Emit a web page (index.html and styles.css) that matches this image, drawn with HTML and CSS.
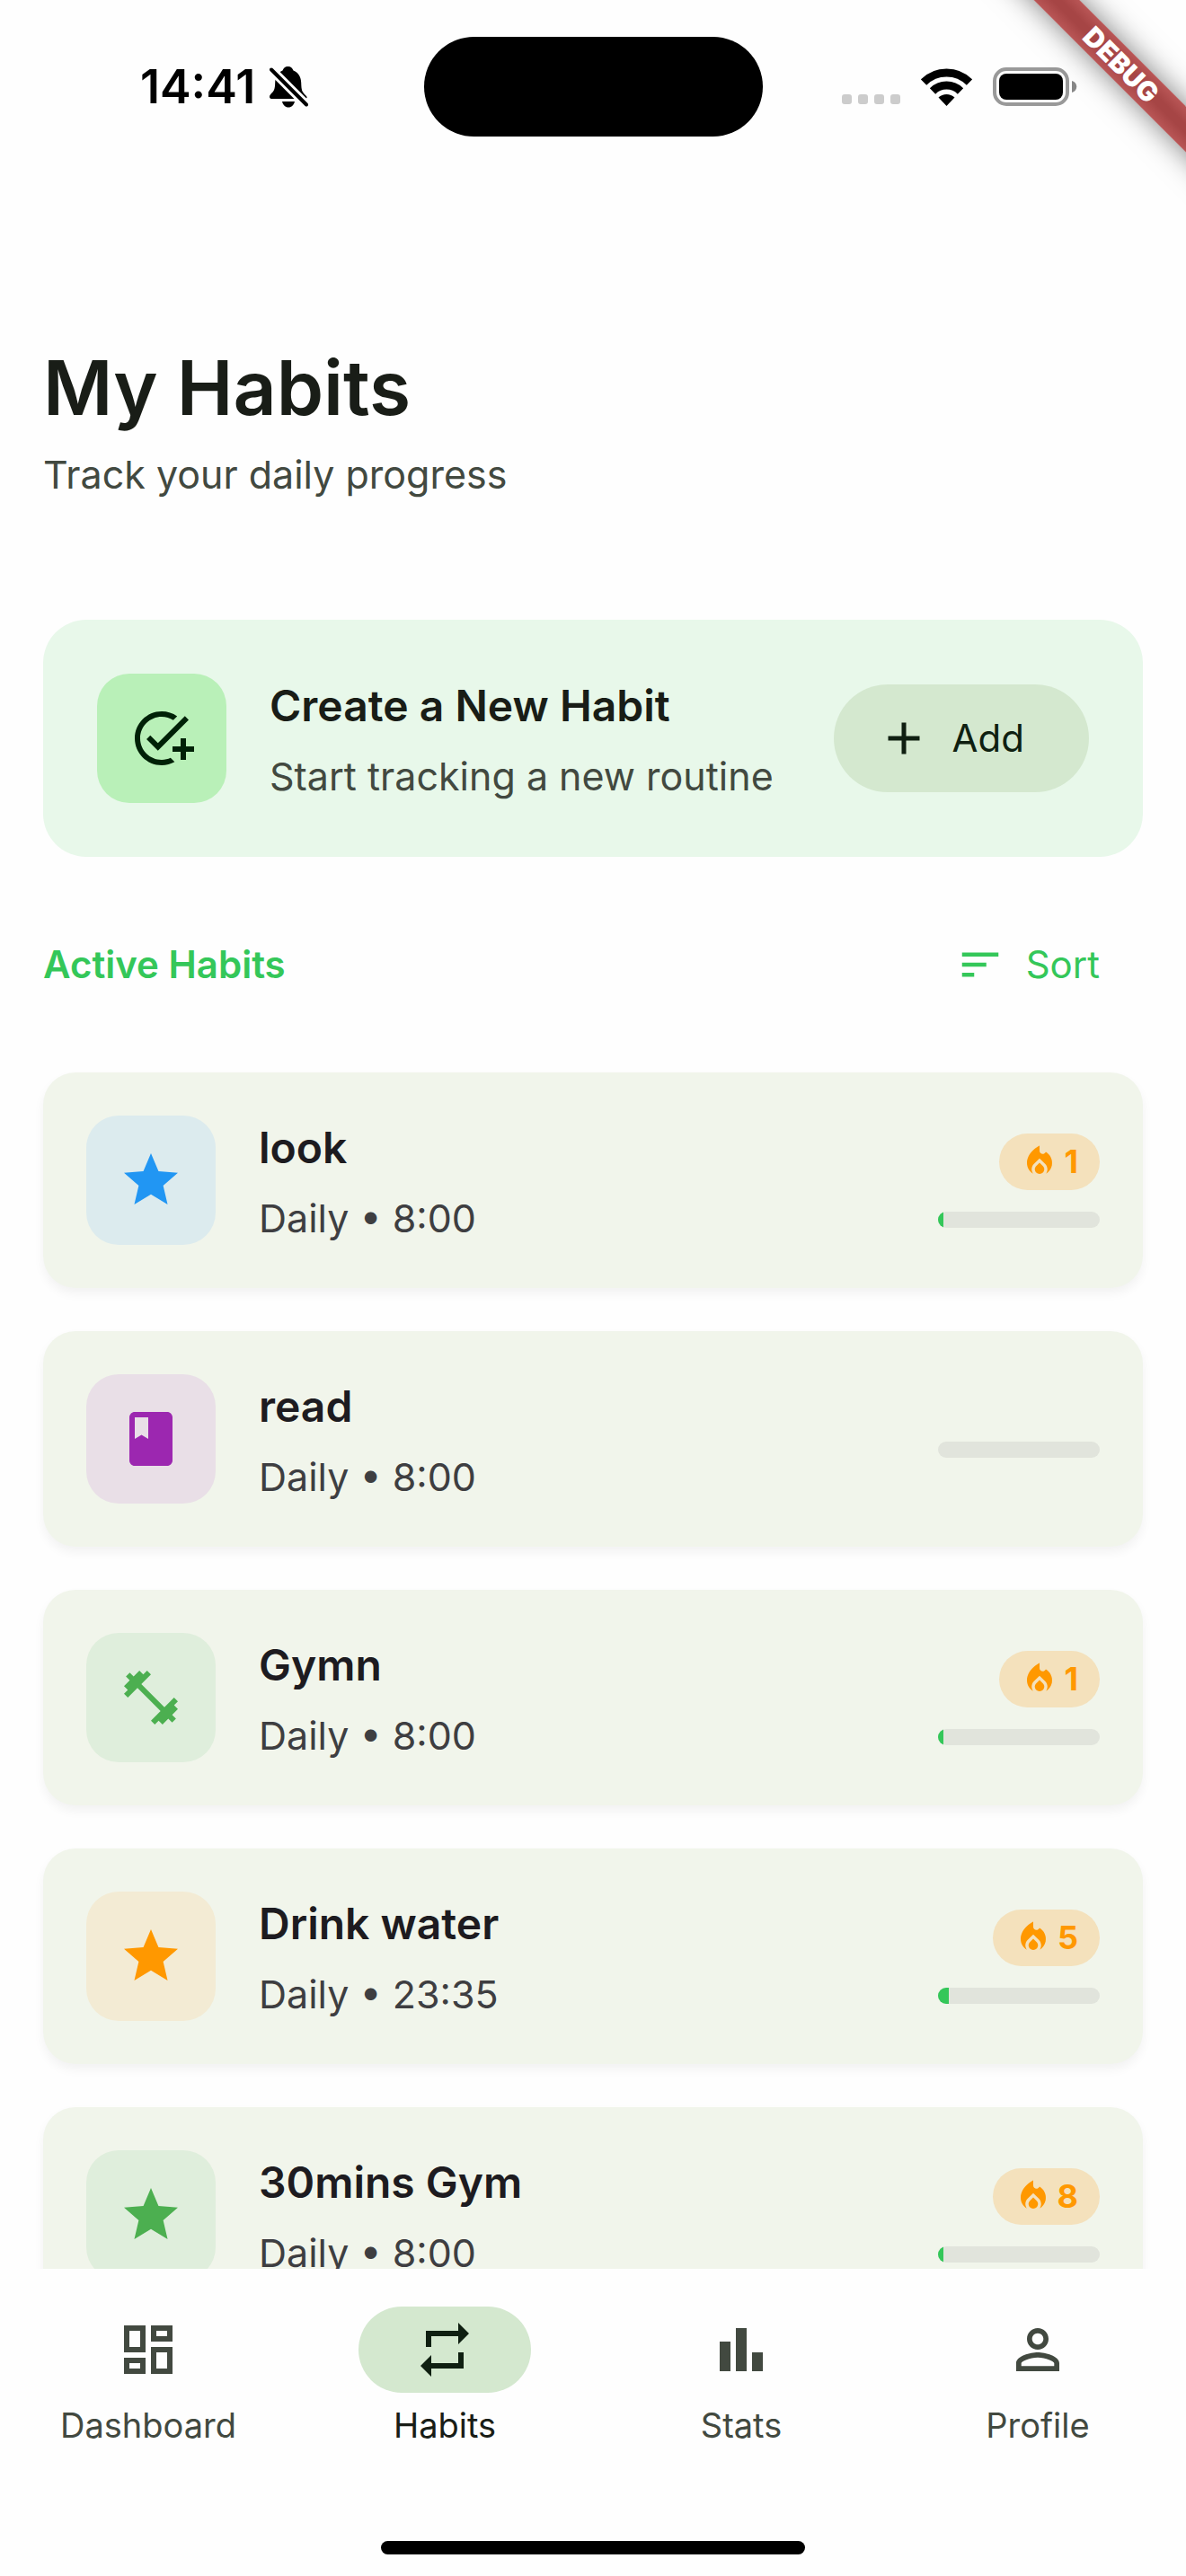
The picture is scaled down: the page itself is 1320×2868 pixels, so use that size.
FILE: index.html
```html
<!DOCTYPE html>
<html lang="en">
<head>
<meta charset="utf-8">
<meta name="viewport" content="width=device-width, initial-scale=1">
<title>My Habits</title>
<link rel="stylesheet" href="styles.css">
</head>
<body>
<svg class="sprite" aria-hidden="true">
  <symbol id="star" viewBox="0 0 24 24"><path d="M12 17.27L18.18 21l-1.64-7.03L22 9.24l-7.19-.61L12 2 9.19 8.63 2 9.24l5.46 4.73L5.82 21z"/></symbol>
  <symbol id="book" viewBox="0 0 24 24"><path d="M18 2H6c-1.1 0-2 .9-2 2v16c0 1.1.9 2 2 2h12c1.1 0 2-.9 2-2V4c0-1.1-.9-2-2-2zM6 4h5v8l-2.500-1.500L6 12V4z"/></symbol>
  <symbol id="dumbbell" viewBox="0 0 24 24"><path d="M20.57 14.86L22 13.43 20.57 12 17 15.57 8.43 7 12 3.43 10.57 2 9.14 3.43 7.71 2 5.57 4.14 4.14 2.71 2.71 4.14l1.43 1.43L2 7.71l1.43 1.43L2 10.57 3.43 12 7 8.43 15.57 17 12 20.57 13.43 22l1.43-1.43L16.29 22l2.14-2.14 1.43 1.43 1.43-1.43-1.43-1.43L22 16.29z"/></symbol>
  <symbol id="fire" viewBox="0 0 24 24"><path d="M12 12.9l-2.13 2.09C9.31 15.55 9 16.28 9 17.06 9 18.68 10.35 20 12 20s3-1.32 3-2.94c0-.78-.31-1.52-.87-2.07z"/><path d="M16 6l-.44.55C14.38 8.02 12 7.19 12 5.3V2S4 6 4 13c0 2.920 1.560 5.470 3.890 6.860-.56-.79-.89-1.760-.89-2.800 0-1.320.52-2.560 1.470-3.500L12 10.100l3.530 3.470c.95.93 1.470 2.170 1.470 3.500 0 1.020-.31 1.960-.85 2.750 1.890-1.150 3.290-3.060 3.710-5.300.66-3.550-1.070-6.900-3.860-8.520z"/></symbol>
</svg>

<header class="status">
  <div class="status-left">
    <time>14:41</time>
    <svg class="bell" viewBox="0 0 43 46" aria-label="Silent mode">
      <path d="M20.500 0c3.200 0 5 1.800 6 4.500 6 2.500 8.500 7.500 8.700 13.500.3 9 .8 10 5.300 14.500 2 2 1 3.500-1 3.500H3c-3 0-4-2.500-1.800-5C5 27 6 26 6.200 18c.2-6 2.800-11 8.300-13.500C15.500 1.800 17.300 0 20.500 0z"/>
      <path d="M14 39h14c-1 4-3.500 6.500-7 6.500S15 43 14 39z"/>
      <path class="bell-gap" d="M2 3.500L41 42.500"/>
      <path class="bell-slash" d="M2 3.500L41 42.500"/>
    </svg>
  </div>
  <div class="island"></div>
  <div class="status-right">
    <div class="cell"><i></i><i></i><i></i><i></i></div>
    <svg class="wifi" viewBox="0 0 57 42" aria-label="Wi-Fi">
      <path class="arc" d="M3 15.500A36 36 0 0 1 54 15.500M13 25.500A22 22 0 0 1 44 25.500"/>
      <path d="M28.500 42L19.500 32.500A13 13 0 0 1 37.500 32.500z"/>
    </svg>
    <svg class="battery" viewBox="0 0 94 44" aria-label="Battery full">
      <rect class="case" x="2" y="2" width="81" height="39" rx="13"/>
      <rect x="7" y="7" width="71" height="29" rx="8"/>
      <path class="nub" d="M88 15c7 2 7 11 0 13z"/>
    </svg>
  </div>
</header>
<div class="corner"><div class="debug">DEBUG</div></div>

<main class="page">
  <h1>My Habits</h1>
  <p class="lead">Track your daily progress</p>

  <section class="create">
    <span class="tile tile-add"><svg class="icon" viewBox="0 0 24 24" aria-hidden="true"><path d="M22 5.180L10.590 16.600l-4.240-4.240 1.410-1.410 2.830 2.830 10-10zM12 20c-4.410 0-8-3.590-8-8s3.590-8 8-8c1.570 0 3.040.46 4.280 1.250l1.450-1.450C16.100 2.670 14.130 2 12 2 6.480 2 2 6.480 2 12s4.480 10 10 10c1.730 0 3.360-.44 4.780-1.220l-1.500-1.500c-1 .46-2.110.72-3.280.72zM19 15h-3v2h3v3h2v-3h3v-2h-3v-3h-2z"/></svg></span>
    <div class="info">
      <h2>Create a New Habit</h2>
      <p>Start tracking a new routine</p>
    </div>
    <button class="add" type="button"><svg viewBox="0 0 24 24" aria-hidden="true"><path d="M19 13h-6v6h-2v-6H5v-2h6V5h2v6h6z"/></svg>Add</button>
  </section>

  <div class="list-head">
    <h2>Active Habits</h2>
    <button class="sort" type="button"><svg viewBox="0 0 24 24" aria-hidden="true"><path d="M3 18h6v-2H3v2zM3 6v2h18V6H3zm0 7h12v-2H3v2z"/></svg>Sort</button>
  </div>

  <ul class="habits">
    <li class="habit">
      <span class="tile blue"><svg class="icon"><use href="#star"/></svg></span>
      <div class="info"><h3>look</h3><p>Daily • 8:00</p></div>
      <div class="score"><span class="streak"><svg><use href="#fire"/></svg>1</span><progress max="30" value="1" aria-label="look progress"></progress></div>
    </li>
    <li class="habit">
      <span class="tile purple"><svg class="icon"><use href="#book"/></svg></span>
      <div class="info"><h3>read</h3><p>Daily • 8:00</p></div>
      <div class="score"><progress max="30" value="0" aria-label="read progress"></progress></div>
    </li>
    <li class="habit">
      <span class="tile green"><svg class="icon"><use href="#dumbbell"/></svg></span>
      <div class="info"><h3>Gymn</h3><p>Daily • 8:00</p></div>
      <div class="score"><span class="streak"><svg><use href="#fire"/></svg>1</span><progress max="30" value="1" aria-label="Gymn progress"></progress></div>
    </li>
    <li class="habit">
      <span class="tile orange"><svg class="icon"><use href="#star"/></svg></span>
      <div class="info"><h3>Drink water</h3><p>Daily • 23:35</p></div>
      <div class="score"><span class="streak"><svg><use href="#fire"/></svg>5</span><progress max="30" value="2" aria-label="Drink water progress"></progress></div>
    </li>
    <li class="habit">
      <span class="tile green"><svg class="icon"><use href="#star"/></svg></span>
      <div class="info"><h3>30mins Gym</h3><p>Daily • 8:00</p></div>
      <div class="score"><span class="streak"><svg><use href="#fire"/></svg>8</span><progress max="30" value="1" aria-label="30mins Gym progress"></progress></div>
    </li>
  </ul>
</main>

<nav class="tabs">
  <a href="#dashboard"><span class="pill"><svg class="icon" viewBox="0 0 24 24"><path d="M19 5v2h-4V5h4M9 5v6H5V5h4m10 8v6h-4v-6h4M9 17v2H5v-2h4M21 3h-8v6h8V3zM11 3H3v10h8V3zm10 8h-8v10h8V11zm-10 4H3v6h8v-6z"/></svg></span>Dashboard</a>
  <a href="#habits" class="active" aria-current="page"><span class="pill"><svg class="icon" viewBox="0 0 24 24"><path d="M7 7h10v3l4-4-4-4v3H5v6h2V7zm10 10H7v-3l-4 4 4 4v-3h12v-6h-2v4z"/></svg></span>Habits</a>
  <a href="#stats"><span class="pill"><svg class="icon" viewBox="0 0 24 24"><path d="M4 9h4v11H4zM10 4h4v16h-4zM16 13h4v7h-4z"/></svg></span>Stats</a>
  <a href="#profile"><span class="pill"><svg class="icon" viewBox="0 0 24 24"><path d="M12 5.900c1.160 0 2.100.94 2.100 2.100s-.94 2.100-2.100 2.100S9.900 9.160 9.900 8s.94-2.100 2.100-2.100m0 9c2.970 0 6.100 1.460 6.100 2.100v1.100H5.900V17c0-.64 3.130-2.100 6.100-2.100M12 4C9.790 4 8 5.790 8 8s1.790 4 4 4 4-1.790 4-4-1.790-4-4-4zm0 9c-2.670 0-8 1.340-8 4v3h16v-3c0-2.660-5.330-4-8-4z"/></svg></span>Profile</a>
</nav>
<div class="home-bar"></div>
</body>
</html>
```
FILE: styles.css
```css
* {
  box-sizing: border-box;
  margin: 0;
  padding: 0;
}

body {
  position: relative;
  display: flex;
  flex-direction: column;
  height: 100vh;
  overflow: hidden;
  background: #fefefe;
  color: #191d17;
  font: 400 43px/60px Inter, "Liberation Sans", sans-serif;
}

button {
  border: 0;
  background: none;
  font: inherit;
  font-size: 42px;
  cursor: pointer;
}

svg {
  display: block;
  flex: none;
  fill: currentColor;
}

h1,
h2,
h3 {
  font-weight: 600;
}

.sprite {
  position: absolute;
  width: 0;
  height: 0;
}

.icon {
  width: 72px;
  height: 72px;
}

/* Status bar */
.status {
  flex: none;
  display: grid;
  grid-template-columns: 1fr auto 1fr;
  align-items: center;
  padding-top: 41px;
  color: #000;
}

.status-left,
.status-right {
  display: flex;
  align-items: center;
}

.status-left {
  gap: 16px;
  padding-left: 156px;
}

.status-left time {
  font-size: 52px;
  font-weight: 600;
}

.bell {
  width: 43px;
  height: 46px;
}

.bell-gap,
.bell-slash {
  fill: none;
  stroke: #fefefe;
  stroke-width: 10;
}

.bell-slash {
  stroke: #000;
  stroke-width: 4;
  stroke-linecap: round;
}

.island {
  width: 377px;
  height: 111px;
  border-radius: 56px;
  background: #000;
}

.status-right {
  justify-content: flex-end;
  gap: 23px;
  padding-right: 121px;
}

.cell {
  display: flex;
  gap: 7px;
  padding-top: 28px;
}

.cell i {
  width: 11px;
  height: 11px;
  border-radius: 3px;
  background: #ccc;
}

.wifi {
  width: 57px;
  height: 42px;
}

.wifi .arc {
  fill: none;
  stroke: #000;
  stroke-width: 9;
}

.battery {
  width: 94px;
  height: 44px;
}

.battery .case {
  fill: none;
  stroke: #999;
  stroke-width: 4;
}

.battery .nub {
  fill: #888;
}

/* Ribbon over the top right corner */
.corner {
  position: absolute;
  top: 0;
  right: 0;
  width: 240px;
  height: 240px;
  overflow: hidden;
  pointer-events: none;
}

.debug {
  position: absolute;
  top: 54px;
  right: -128px;
  width: 400px;
  background: linear-gradient(#b95656, #a64545 40%, #a64545 60%, #b95656);
  box-shadow: 0 0 32px rgba(0, 0, 0, .5);
  color: #fff;
  font-size: 30px;
  font-weight: 900;
  line-height: 36px;
  text-align: center;
  transform: rotate(45deg);
}

/* Page */
.page {
  flex: 1;
  min-height: 0;
  overflow: hidden;
  padding: 226px 48px 0;
}

h1 {
  font-size: 84px;
  line-height: 108px;
}

.lead {
  margin-top: 12px;
  color: #424940;
}

.create {
  display: flex;
  align-items: center;
  gap: 48px;
  margin-top: 132px;
  padding: 60px;
  border-radius: 48px;
  background: #e8f8ea;
}

.tile {
  flex: none;
  display: grid;
  place-items: center;
  width: 144px;
  height: 144px;
  border-radius: 36px;
}

.tile-add { background: #b9f0b8; color: #002107; }
.blue { background: #dcebee; color: #2196f3; }
.purple { background: #e9dfe7; color: #9c27b0; }
.green { background: #dfeedc; color: #4caf50; }
.orange { background: #f3ebd4; color: #ff9800; }

.info {
  flex: 1;
  min-width: 0;
  display: grid;
  gap: 12px;
  white-space: nowrap;
}

.info h2,
.info h3 {
  font-size: 48px;
  line-height: 72px;
}

.info p {
  color: #424940;
}

.add {
  display: flex;
  align-items: center;
  gap: 24px;
  height: 120px;
  padding: 0 72px 0 48px;
  border-radius: 60px;
  background: #d4e8cf;
  color: #0f1f11;
}

.add svg {
  width: 60px;
  height: 60px;
}

.list-head {
  display: flex;
  align-items: center;
  justify-content: space-between;
  margin: 60px 0;
  color: #34c759;
}

.list-head h2 {
  font-size: 42px;
}

.sort {
  display: flex;
  align-items: center;
  gap: 24px;
  height: 120px;
  padding: 0 48px 0 36px;
  color: #34c759;
}

.sort svg {
  width: 54px;
  height: 54px;
}

.habits {
  display: grid;
  gap: 48px;
  list-style: none;
}

.habit {
  display: flex;
  align-items: center;
  gap: 48px;
  padding: 48px;
  border-radius: 36px;
  background: #f1f5eb;
  box-shadow: 0 6px 12px rgba(0, 0, 0, .05);
}

.habit h3 {
  color: #1d1b20;
}

.habit p {
  color: #3e3e41;
}

.score {
  display: grid;
  justify-items: end;
}

.streak {
  display: flex;
  align-items: center;
  gap: 6px;
  padding: 6px 24px;
  border-radius: 32px;
  background: #f4e1bc;
  color: #ff9800;
  font-size: 36px;
  font-weight: 700;
  line-height: 51px;
}

.streak svg {
  width: 42px;
  height: 42px;
}

progress {
  appearance: none;
  display: block;
  width: 180px;
  height: 18px;
  margin-top: 24px;
  overflow: hidden;
  border: 0;
  border-radius: 9px;
}

progress::-webkit-progress-bar {
  background: #e1e4dc;
}

progress::-webkit-progress-value {
  background: #34c759;
}

/* Bottom navigation */
.tabs {
  flex: none;
  display: grid;
  grid-template-columns: repeat(4, 1fr);
  padding: 42px 0 105px;
}

.tabs a {
  display: grid;
  justify-items: center;
  gap: 12px;
  color: #424940;
  font-size: 38px;
  line-height: 48px;
  text-decoration: none;
}

.tabs .active {
  color: #191d17;
}

.pill {
  display: grid;
  place-items: center;
  width: 192px;
  height: 96px;
  border-radius: 48px;
}

.active .pill {
  background: #d4e8cf;
  color: #0f1f11;
}

.home-bar {
  flex: none;
  align-self: center;
  width: 472px;
  height: 15px;
  margin-bottom: 24px;
  border-radius: 8px;
  background: #000;
}
```
